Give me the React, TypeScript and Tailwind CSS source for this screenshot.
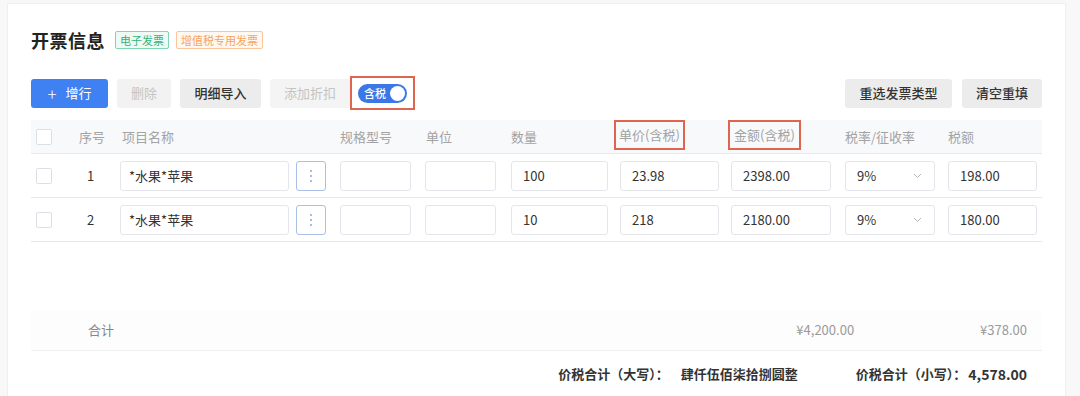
import React from 'react'

const rows = [
  { no: 1, name: '*水果*苹果', qty: '100', price: '23.98', amount: '2398.00', rate: '9%', tax: '198.00' },
  { no: 2, name: '*水果*苹果', qty: '10', price: '218', amount: '2180.00', rate: '9%', tax: '180.00' },
]

const grid = 'grid grid-cols-[39px_46px_217px_85px_85px_111px_111px_113px_104px_101px]'
const input = 'h-[30px] border border-[#e4e6eb] rounded-[3px] bg-white flex items-center px-[11px] text-[13px] text-[#333]'

function Checkbox() {
  return <div className="w-[16px] h-[16px] border border-[#dcdfe6] rounded-[2px] bg-white ml-[5px]" />
}

export default function App() {
  return (
    <div className="w-[1080px] h-[396px] bg-[#f8f8f8] pt-[3px] pl-[7px] overflow-hidden" style={{ fontFamily: '"Noto Sans CJK SC", "Noto Sans", sans-serif' }}>
      <div className="w-[1059px] h-[400px] bg-white border border-[#efefef] px-[23px] pt-[21px]">
        {/* title */}
        <div className="flex items-center h-[30px]">
          <span className="text-[18px] font-bold text-[#222] tracking-[0.5px]">开票信息</span>
          <span className="ml-[10px] h-[18px] px-[4px] flex items-center border border-[#7fd6b0] bg-[#effaf5] text-[#2db47d] text-[11px] rounded-[2px]">电子发票</span>
          <span className="ml-[7px] h-[18px] px-[4px] flex items-center border border-[#f8c59c] bg-[#fff8f1] text-[#f5a35f] text-[11px] rounded-[2px]">增值税专用发票</span>
        </div>

        {/* toolbar */}
        <div className="flex items-center mt-[21px] h-[34px]">
          <button className="w-[77px] h-[29px] rounded-[3px] bg-[#3f80f2] text-white text-[13px] flex items-center justify-center gap-[9px]">
            <span className="text-[17px] font-light leading-none">+</span>
            <span>增行</span>
          </button>
          <button className="ml-[9px] w-[54px] h-[29px] rounded-[3px] bg-[#f2f2f2] text-[#c4c4c4] text-[13px]">删除</button>
          <button className="ml-[9px] w-[81px] h-[29px] rounded-[3px] bg-[#ececec] text-[#333] text-[13px] font-medium">明细导入</button>
          <button className="ml-[9px] w-[80px] h-[29px] rounded-[3px] bg-[#f4f4f4] text-[#c4c4c4] text-[13px]">添加折扣</button>
          <div className="w-[65px] h-[34px] border-2 border-[#e0654f] flex items-center justify-center">
            <div className="w-[49px] h-[19px] rounded-full bg-[#3b78e7] flex items-center pl-[6px] pr-[2px] justify-between">
              <span className="text-white text-[11px] leading-none font-medium">含税</span>
              <span className="w-[15px] h-[15px] rounded-full bg-white" />
            </div>
          </div>
          <div className="flex-1" />
          <button className="w-[107px] h-[29px] rounded-[3px] bg-[#ececec] text-[#333] text-[13px] font-medium">重选发票类型</button>
          <button className="ml-[10px] w-[80px] h-[29px] rounded-[3px] bg-[#ececec] text-[#333] text-[13px] font-medium">清空重填</button>
        </div>

        {/* header */}
        <div className={`${grid} mt-[10px] h-[34px] bg-[#f8f9fb] border-b border-[#e8e8e8] items-center text-[13px] text-[#a3a3a3]`}>
          <div><Checkbox /></div>
          <div className="pl-[9px]">序号</div>
          <div className="pl-[6px]">项目名称</div>
          <div className="pl-[7px]">规格型号</div>
          <div className="pl-[8px]">单位</div>
          <div className="pl-[8px]">数量</div>
          <div>
            <span className="inline-block border-2 border-[#e0654f] px-[3px] h-[30px] leading-[26px] -mt-[4px] align-top">单价(含税)</span>
          </div>
          <div className="pl-[3px]">
            <span className="inline-block border-2 border-[#e0654f] px-[4px] h-[30px] leading-[26px] -mt-[4px] align-top">金额(含税)</span>
          </div>
          <div className="pl-[7px]">税率/征收率</div>
          <div className="pl-[6px]">税额</div>
        </div>

        {/* rows */}
        {rows.map((r) => (
          <div key={r.no} className={`${grid} h-[44px] border-b border-[#e8e8e8] items-center`}>
            <div><Checkbox /></div>
            <div className="pl-[17px] text-[13px] text-[#333]">{r.no}</div>
            <div className="flex items-center pl-[4px]">
              <div className={`${input} w-[169px] !px-[8px]`}>{r.name}</div>
              <div className="ml-[7px] w-[30px] h-[30px] border border-[#a9c0e6] rounded-[3px] flex flex-col items-center justify-center gap-[3px]">
                <span className="w-[2px] h-[2px] rounded-full bg-[#8aa6d6]" />
                <span className="w-[2px] h-[2px] rounded-full bg-[#8aa6d6]" />
                <span className="w-[2px] h-[2px] rounded-full bg-[#8aa6d6]" />
              </div>
            </div>
            <div className="pl-[7px]"><div className={`${input} w-[71px]`} /></div>
            <div className="pl-[7px]"><div className={`${input} w-[71px]`} /></div>
            <div className="pl-[8px]"><div className={`${input} w-[97px]`}>{r.qty}</div></div>
            <div className="pl-[6px]"><div className={`${input} w-[99px]`}>{r.price}</div></div>
            <div className="pl-[6px]"><div className={`${input} w-[100px]`}>{r.amount}</div></div>
            <div className="pl-[7px]">
              <div className={`${input} w-[90px] justify-between !pr-[12px]`}>
                <span>{r.rate}</span>
                <svg width="9" height="6" viewBox="0 0 9 6" fill="none"><path d="M1 1l3.5 3.5L8 1" stroke="#b8b8b8" strokeWidth="1" /></svg>
              </div>
            </div>
            <div className="pl-[6px]"><div className={`${input} w-[89px]`}>{r.tax}</div></div>
          </div>
        ))}

        {/* spacer */}
        <div className="h-[68px]" />

        {/* total row */}
        <div className="h-[41px] bg-[#fdfdfe] border-b border-[#f0f0f0] flex items-center text-[13px] text-[#888]">
          <div className="pl-[57px] w-[300px]">合计</div>
          <div className="flex-1" />
          <div className="text-[#999] mr-[126px]">¥4,200.00</div>
          <div className="text-[#999] mr-[15px]">¥378.00</div>
        </div>

        {/* bottom */}
        <div className="h-[46px] flex items-center justify-end text-[13px] font-bold text-[#333] pr-[15px]">
          <span>价税合计（大写）：</span>
          <span className="ml-[12px]">肆仟伍佰柒拾捌圆整</span>
          <span className="ml-[58px]">价税合计（小写）：</span>
          <span className="ml-[2px] text-[14px]">4,578.00</span>
        </div>
      </div>
    </div>
  )
}
